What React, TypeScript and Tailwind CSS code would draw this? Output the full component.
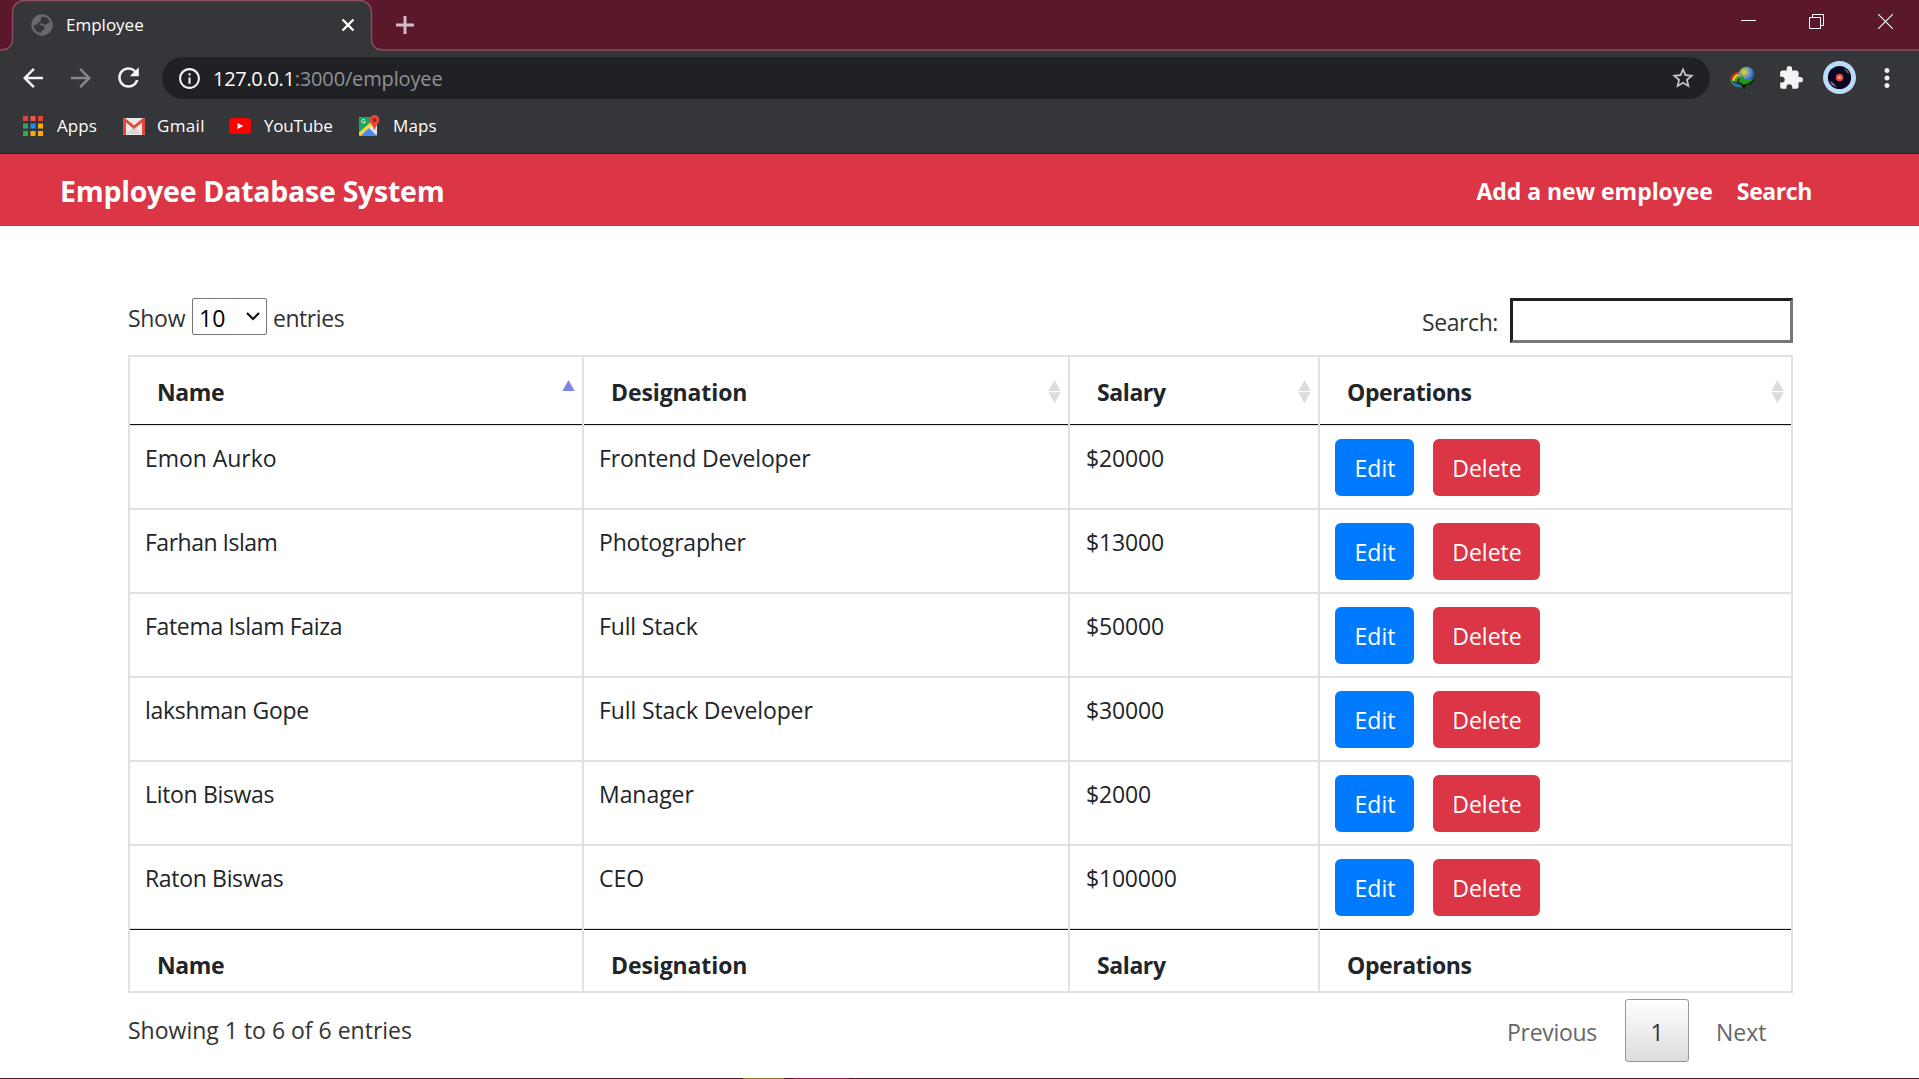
import type { ReactNode } from "react";
import {
  MdArrowBack,
  MdArrowForward,
  MdExtension,
  MdInfoOutline,
  MdMoreVert,
  MdRefresh,
  MdStarBorder,
} from "react-icons/md";

type Cell = { text: string; tracking: string };

const rows: { name: Cell; role: Cell; salary: Cell }[] = [
  {
    name: { text: "Emon Aurko", tracking: "tracking-[-0.05px]" },
    role: { text: "Frontend Developer", tracking: "tracking-[-0.17px]" },
    salary: { text: "$20000", tracking: "tracking-[-0.16px]" },
  },
  {
    name: { text: "Farhan Islam", tracking: "tracking-[-0.5px]" },
    role: { text: "Photographer", tracking: "tracking-[-0.19px]" },
    salary: { text: "$13000", tracking: "tracking-[-0.16px]" },
  },
  {
    name: { text: "Fatema Islam Faiza", tracking: "tracking-[-0.33px]" },
    role: { text: "Full Stack", tracking: "tracking-[-0.15px]" },
    salary: { text: "$50000", tracking: "tracking-[-0.16px]" },
  },
  {
    name: { text: "lakshman Gope", tracking: "tracking-[-0.27px]" },
    role: { text: "Full Stack Developer", tracking: "tracking-[-0.13px]" },
    salary: { text: "$30000", tracking: "tracking-[-0.16px]" },
  },
  {
    name: { text: "Liton Biswas", tracking: "tracking-[-0.33px]" },
    role: { text: "Manager", tracking: "tracking-[-0.05px]" },
    salary: { text: "$2000", tracking: "tracking-[-0.16px]" },
  },
  {
    name: { text: "Raton Biswas", tracking: "tracking-[-0.33px]" },
    role: { text: "CEO", tracking: "tracking-normal" },
    salary: { text: "$100000", tracking: "tracking-[-0.2px]" },
  },
];

const columns = [
  { label: "Name", tracking: "tracking-[-0.4px]", sorted: true },
  { label: "Designation", tracking: "tracking-[-0.1px]", sorted: false },
  { label: "Salary", tracking: "tracking-[-0.4px]", sorted: false },
  { label: "Operations", tracking: "tracking-[-0.4px]", sorted: false },
];

const GRID = "grid grid-cols-[454px_486px_250px_471px]";

function TabStrip() {
  return (
    <div className="relative flex h-[51px] items-start bg-[#5c182b]">
      <svg className="absolute left-0 top-0" width="1919" height="51" viewBox="0 0 1919 51">
        <path
          d="M0 51V50C8 50 12.500 46 12.500 38V14C12.500 5 17 .5 26 .5H358C367 .5 371.500 5 371.500 14V38C371.500 46 376 50 384 50H1919V51Z"
          fill="#35363a"
        />
        <path
          d="M0 50C8 50 12.500 46 12.500 38V14C12.500 5 17 .5 26 .5H358C367 .5 371.500 5 371.500 14V38C371.500 46 376 50 384 50H1919"
          fill="none"
          stroke="#8c4d5e"
          strokeWidth="1.500"
        />
      </svg>
      <div className="relative flex h-[50px] w-[372px] items-center pl-[31px] pr-[17px]">
        <svg width="22" height="22" viewBox="0 0 22 22">
          <circle cx="11" cy="11" r="10.700" fill="#66696d" />
          <path
            d="M10.500 3c2.500-.6 5 .2 7 2.200l1.600 3.300c-1.600-.4-2.400.6-3.800 1.800-1.200 1-2.600.2-3.600-.8-1.600-.6-2.800.4-3.200 1.800 2.600 0 4.800.4 5 2.400.2 1.800-1.400 2-2.400 2.800-.8 1-.6 2.200-1.800 2.300-3.400-.4-6.300-3.600-6.600-7.800 1.600 0 2.800-.2 4-1 .4-1.800 2.200-1.800 3-2.800.8-1.400-.6-2.600.8-4.200z"
            fill="#35363a"
          />
        </svg>
        <span className="ml-[13px] text-[17px] text-white">Employee</span>
        <svg className="ml-auto" width="14" height="14" viewBox="0 0 14 14">
          <path d="M1.500 1.500l11 11M12.500 1.500l-11 11" stroke="#fff" strokeWidth="2.300" />
        </svg>
      </div>
      <svg className="relative ml-[24px] mt-4" width="18" height="18" viewBox="0 0 18 18">
        <path d="M9 0v18M0 9h18" stroke="#cebfc5" strokeWidth="2.900" />
      </svg>
      <div className="relative ml-auto mr-[26px] mt-[14px] flex gap-[53px]">
        <svg width="15" height="15" viewBox="0 0 15 15">
          <path d="M0 6.500h15" stroke="#fff" />
        </svg>
        <svg width="16" height="15" viewBox="0 0 16 15">
          <path d="M.5 3.500h11v11H.5zM3.500 3.500V.5h11v11h-3" fill="none" stroke="#fff" />
        </svg>
        <svg width="15" height="15" viewBox="0 0 15 15">
          <path d="M0 0l15 15M15 0L0 15" stroke="#fff" strokeWidth="1.100" />
        </svg>
      </div>
    </div>
  );
}

function DownloaderIcon() {
  return (
    <svg width="26" height="24" viewBox="0 0 26 24">
      <defs>
        <radialGradient id="orb" cx="0.35" cy="0.35" r="0.75">
          <stop offset="0" stopColor="#d9d872" />
          <stop offset="0.300" stopColor="#9fae58" />
          <stop offset="0.550" stopColor="#4f8ce0" />
          <stop offset="1" stopColor="#173f94" />
        </radialGradient>
      </defs>
      <path d="M11 7C4 6.500 1.500 10.500 1.500 14" fill="none" stroke="#e02a1a" strokeWidth="2.200" />
      <path d="M11 9C6.500 8.500 3.500 11 3.500 15" fill="none" stroke="#f5d313" strokeWidth="2.200" />
      <path d="M10 11C7 11 5.500 13 6 16" fill="none" stroke="#35b52c" strokeWidth="1.800" />
      <path d="M1.500 14c.5 5 6 7 11 6" fill="none" stroke="#2c9a4c" strokeWidth="2" />
      <path d="M4 17c2 2.500 5 3 8 2" fill="none" stroke="#2c62d8" strokeWidth="2" />
      <circle cx="16.500" cy="8.500" r="7.800" fill="url(#orb)" />
      <path d="M7.500 16l5-5 1.500 3 9-1.500 2 1.500-5 4.500h-3L14 24l-3-5z" fill="#0a2608" />
      <path d="M8.500 15.500l3.500-6 2.500 3.500 9.500 0-6 4.500-4.500 1z" fill="#1f9a14" />
    </svg>
  );
}

function Toolbar() {
  return (
    <div className="flex h-[54px] items-center pb-px pl-[18px] pr-[17px] text-[#f1f3f4]">
      <MdArrowBack size={30} />
      <MdArrowForward size={30} className="ml-[18px] text-[#85878a]" />
      <MdRefresh size={31} className="ml-[17px]" />
      <div className="ml-[18px] mt-px flex h-[42px] w-[1548px] shrink-0 items-center rounded-full bg-[#202124] pl-[15px] pr-[14px] text-[20px]">
        <MdInfoOutline size={25} />
        <span className="ml-[11px] pt-px tracking-[-0.3px] text-white">127.0.0.1</span>
        <span className="pt-px tracking-[-0.15px] text-[#8f9296]">:3000/employee</span>
        <MdStarBorder size={26} className="ml-auto text-[#c4c5c7]" />
      </div>
      <div className="ml-5">
        <DownloaderIcon />
      </div>
      <MdExtension size={26} className="ml-[22px] shrink-0" />
      <svg className="ml-[19px] shrink-0" width="33" height="33" viewBox="0 0 33 33">
        <circle cx="16.500" cy="16.500" r="16.500" fill="#b9dcf8" />
        <circle cx="16.500" cy="16.500" r="11.600" fill="#0b0620" />
        <path d="M20 6.500l5 3.500 1.500 3-3-1.500z" fill="#5e5d66" />
        <path d="M6.500 20l3.500 1.500 4 5-5-2.500z" fill="#77767d" />
        <circle cx="16.500" cy="16.500" r="3.800" fill="#ee3d5e" />
        <circle cx="16.500" cy="16.500" r="1.600" fill="#ffc45c" />
      </svg>
      <MdMoreVert size={30} className="ml-4 shrink-0" />
    </div>
  );
}

function AppsIcon() {
  const dots = ["#ea4335", "#f0564a", "#ea4335", "#34a853", "#1a8cff", "#f9ab00", "#34a853", "#f9ab00", "#f9ab00"];
  return (
    <svg width="20" height="20" viewBox="0 0 20 20">
      {dots.map((fill, i) => (
        <rect key={i} x={(i % 3) * 7.5} y={Math.floor(i / 3) * 7.5} width="5" height="5" fill={fill} />
      ))}
    </svg>
  );
}

function GmailIcon() {
  return (
    <svg width="22" height="17" viewBox="0 0 22 17">
      <rect width="22" height="17" rx="1.500" fill="#ece9e9" />
      <path d="M3 16l8-7 8 7z" fill="#d9d5d5" />
      <path d="M0 1.500A1.500 1.500 0 011.500 0H2l9 7.500L20 0h.5A1.500 1.500 0 0122 1.500V15.500A1.500 1.500 0 0120.500 17H19V4.500L11 11 3 4.500V17H1.500A1.500 1.500 0 010 15.500z" fill="#dd4b3e" />
    </svg>
  );
}

function YouTubeIcon() {
  return (
    <svg width="22" height="16" viewBox="0 0 22 16">
      <rect width="22" height="16" rx="3.500" fill="#f00" />
      <path d="M8.500 5v6l6-3z" fill="#fff" />
    </svg>
  );
}

function MapsIcon() {
  return (
    <svg width="22" height="22" viewBox="0 0 22 22">
      <path d="M1 4a2 2 0 012-2h12l4 8v9a2 2 0 01-2 2H3a2 2 0 01-2-2z" fill="#e6e6e6" />
      <path d="M1 4a2 2 0 012-2h10l1 5L1 19z" fill="#1fa463" />
      <path d="M1 17.500L13 7l2 2.500L3 21a2 2 0 01-2-2z" fill="#fdd835" />
      <path d="M2.500 21l8.500-8 8 8z" fill="#4a89f3" />
      <path d="M7.200 5.200A1.900 1.900 0 107.400 6.700H5.800" fill="none" stroke="#d7f0e2" strokeWidth="1" />
      <path d="M16.500 0a5 5 0 015 5c0 3.500-4 5-4.300 9.500h-1.400C15.500 10 11.500 8.500 11.500 5a5 5 0 015-5z" fill="#e84435" />
      <circle cx="16.500" cy="5" r="1.800" fill="#8c231b" />
    </svg>
  );
}

function Bookmark({ icon, label, className }: { icon: ReactNode; label: string; className: string }) {
  return (
    <div className={`flex items-center ${className}`}>
      {icon}
      {label}
    </div>
  );
}

function SortIcon({ sorted }: { sorted: boolean }) {
  return (
    <svg className="mt-[23px]" width="13" height="24" viewBox="0 0 13 24">
      <path d="M6.500 0l6.200 11H.3z" fill={sorted ? "#8087e0" : "#dcdcdc"} />
      {!sorted && <path d="M.3 12.300h12.400L6.500 23.300z" fill="#dcdcdc" />}
    </svg>
  );
}

function BodyCell({ cell }: { cell: Cell }) {
  return (
    <div className={`border-r-2 border-[#dee2e6] pl-[15px] pt-[14px] ${cell.tracking}`}>{cell.text}</div>
  );
}

export default function App() {
  return (
    <div className="flex h-[1079px] w-[1919px] flex-col overflow-hidden whitespace-nowrap bg-white font-['Open_Sans','Noto_Sans',sans-serif] text-[23px] leading-[36px] text-[#212529]">
      <header className="h-[154px] shrink-0 border-b border-[#222326] bg-[#35363a]">
        <TabStrip />
        <Toolbar />
        <div className="flex h-[42px] items-center pl-[23px] text-[17px] text-white">
          <Bookmark icon={<AppsIcon />} label="Apps" className="w-[100px] gap-[14px] tracking-[0.1px]" />
          <Bookmark icon={<GmailIcon />} label="Gmail" className="w-[106px] gap-[12px] tracking-[0.35px]" />
          <Bookmark icon={<YouTubeIcon />} label="YouTube" className="w-[129px] gap-[13px] tracking-[-0.2px]" />
          <Bookmark icon={<MapsIcon />} label="Maps" className="gap-[13px] tracking-[0.1px]" />
        </div>
      </header>

      <nav className="flex h-[72px] shrink-0 items-center bg-[#dc3545] pl-[60px] pr-[107px] pt-[2px] font-bold text-white">
        <span className="text-[28.5px] tracking-[-0.25px]">Employee Database System</span>
        <span className="ml-auto tracking-[-0.06px]">Add a new employee</span>
        <span className="ml-[24px] tracking-[-0.4px]">Search</span>
      </nav>

      <main className="flex grow flex-col px-32 pr-[126px] pt-[72px] text-[#333]">
        <div className="flex h-[57px] items-start">
          <span className="mt-[2px] w-[57px] tracking-[-0.3px]">Show</span>
          <div className="ml-[7px] flex h-[37px] w-[75px] items-center justify-between rounded-[2px] border border-[#767676] pl-[6px] pr-[6px] text-black">
            <span className="pt-[2px]">10</span>
            <svg className="mb-[1px]" width="14" height="9" viewBox="0 0 14 9">
              <path d="M1 1l6 6 6-6" fill="none" stroke="#111" strokeWidth="2.200" />
            </svg>
          </div>
          <span className="ml-[6px] mt-[2px] tracking-[-0.45px]">entries</span>
          <span className="ml-auto mt-[6px] tracking-[-0.4px]">Search:</span>
          <div className="ml-[12px] h-[45px] w-[283px] border-[3px] border-b-[#767676] border-l-[#212121] border-r-[#767676] border-t-[#212121]" />
        </div>

        <div className="w-[1665px] border-2 border-[#dee2e6] text-[#212529]">
          <div className={`${GRID} h-[69px] font-bold`}>
            {columns.map((c, i) => (
              <div key={c.label} className={i < 3 ? "flex flex-col border-r-2 border-[#dee2e6]" : "flex flex-col"}>
                <div className={`flex h-[68px] justify-between border-b border-[#111] pl-[27px] pr-[7px] ${c.tracking}`}>
                  <span className="pt-[17px]">{c.label}</span>
                  <SortIcon sorted={c.sorted} />
                </div>
                <div className="h-px bg-[#dee2e6]" />
              </div>
            ))}
          </div>
          {rows.map((r, i) => (
            <div
              key={r.name.text}
              className={i < 5 ? `${GRID} h-[84px] border-b-2 border-[#dee2e6]` : `${GRID} h-[83px] border-b border-[#dee2e6]`}
            >
              <BodyCell cell={r.name} />
              <BodyCell cell={r.role} />
              <div className={`border-r-2 border-[#dee2e6] pl-4 pt-[14px] ${r.salary.tracking}`}>{r.salary.text}</div>
              <div className="flex gap-[19px] pl-[15px] pt-[13px] text-white">
                <button className="h-[57px] w-[79px] rounded-[6px] bg-[#007bff] pl-px">Edit</button>
                <button className="h-[57px] w-[107px] rounded-[6px] bg-[#dc3545] pl-px">Delete</button>
              </div>
            </div>
          ))}
          <div className={`${GRID} h-[62px] font-bold`}>
            {columns.map((c, i) => (
              <div key={c.label} className={i < 3 ? "border-r-2 border-[#dee2e6]" : ""}>
                <div className={`border-t border-[#111] pl-[27px] pt-[17px] ${c.tracking}`}>{c.label}</div>
              </div>
            ))}
          </div>
        </div>

        <div className="mt-[6px] flex h-[63px] items-center">
          <span className="pb-px">Showing 1 to 6 of 6 entries</span>
          <span className="ml-auto pt-[3px] tracking-[-0.3px] text-[#666]">Previous</span>
          <div className="ml-[28px] flex h-[63px] w-16 items-center justify-center rounded-[3px] border border-[#979797] bg-linear-to-b from-white to-[#dcdcdc] pt-[2px]">
            1
          </div>
          <span className="ml-[27px] mr-[27px] w-[50px] pt-[3px] text-[#666]">Next</span>
        </div>
      </main>

      <footer className="flex h-px shrink-0 bg-[#57142b]">
        <div className="ml-[743px] w-[41px] bg-[#9b6a20]" />
        <div className="ml-[10px] w-[55px] bg-[#a3194c]" />
      </footer>
    </div>
  );
}
